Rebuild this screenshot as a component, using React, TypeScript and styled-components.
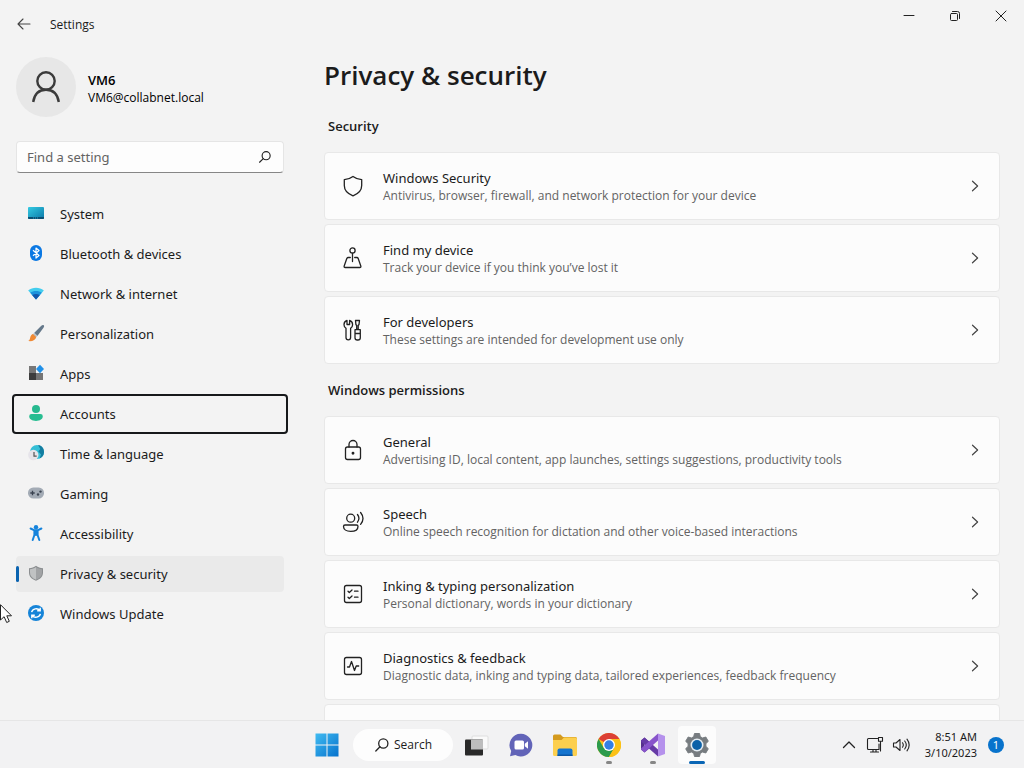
import React from "react";
import styled, { createGlobalStyle, css } from "styled-components";

const GlobalStyle = createGlobalStyle`
  *, *::before, *::after { box-sizing: border-box; }
  html, body { margin: 0; padding: 0; }
  body {
    background: #f3f3f3;
    color: #1b1b1b;
    font-family: "Noto Sans", "Open Sans", sans-serif;
    font-size: 13px;
    line-height: 20px;
  }
  button, input { font: inherit; color: inherit; }
  h1, h2, p { margin: 0; }
  svg { display: block; flex: none; }
`;

const Desktop = styled.div`
  position: relative;
  display: flex;
  flex-direction: column;
  height: 100vh;
  overflow: hidden;
`;

const Window = styled.div`
  flex: 1;
  min-height: 0;
  display: flex;
  flex-direction: column;
`;

const TitleBar = styled.header`
  flex: none;
  display: flex;
  justify-content: space-between;
  align-items: flex-start;
  height: 48px;
`;

const TitleGroup = styled.div`
  display: flex;
  align-items: center;
  height: 48px;
  padding-left: 8px;
  gap: 10px;
  font-family: "Open Sans", sans-serif;
  font-size: 12px;
`;

const WindowTitle = styled.span`
  padding-top: 2px;
`;

const PlainButton = styled.button`
  display: flex;
  align-items: center;
  justify-content: center;
  padding: 0;
  border: 0;
  background: transparent;
`;

const BackButton = styled(PlainButton)`
  width: 32px;
  height: 32px;
`;

const CaptionButtons = styled.div`
  display: flex;
`;

const CaptionButton = styled(PlainButton)`
  width: 46px;
  height: 32px;
`;

const Columns = styled.div`
  flex: 1;
  min-height: 0;
  display: grid;
  grid-template-columns: 300px minmax(0, 1fr);
`;

const Sidebar = styled.aside`
  padding: 9px 16px 0;
`;

const Profile = styled.div`
  display: flex;
  align-items: center;
  gap: 12px;
  height: 60px;
`;

const Avatar = styled.div`
  display: flex;
  align-items: center;
  justify-content: center;
  width: 60px;
  height: 60px;
  border-radius: 50%;
  background: #e7e7e7;
`;

const ProfileText = styled.div`
  padding-top: 4px;
  color: #000;
  font-family: "Open Sans", sans-serif;
  line-height: 18px;
`;

const ProfileName = styled.p`
  font-weight: 600;
`;

const ProfileMail = styled.p`
  font-size: 12px;
`;

const SearchField = styled.label`
  display: flex;
  align-items: center;
  width: 268px;
  height: 32px;
  margin-top: 24px;
  padding: 0 11px 0 10px;
  border: 1px solid #e5e5e5;
  border-bottom-color: #868686;
  border-radius: 4px;
  background: #fdfdfd;
`;

const SearchInput = styled.input`
  flex: 1;
  min-width: 0;
  padding: 0;
  border: 0;
  outline: 0;
  background: transparent;
  &::placeholder { color: #636363; opacity: 1; }
`;

const NavList = styled.nav`
  display: flex;
  flex-direction: column;
  gap: 4px;
  width: 268px;
  margin-top: 23px;
`;

const NavItem = styled.a<{ $focused?: boolean; $current?: boolean }>`
  display: flex;
  align-items: center;
  gap: 14px;
  height: 36px;
  padding-left: 10px;
  border-radius: 4px;
  color: #1b1b1b;
  text-decoration: none;
  ${(p) => p.$focused && css`
    height: 40px;
    margin: -2px -4px;
    padding-left: 12px;
    border: 2px solid #16181a;
  `}
  ${(p) => p.$current && css`
    padding-left: 0;
    gap: 0;
    background: #eaeaea;
    &::before {
      content: "";
      width: 3px;
      height: 16px;
      margin-right: 7px;
      border-radius: 2px;
      background: #0a63b0;
    }
    & > svg { margin-right: 14px; }
  `}
`;

const Main = styled.main`
  min-width: 0;
  min-height: 0;
  overflow: hidden;
  padding: 8px 24px 0;
`;

const PageTitle = styled.h1`
  font-family: "Open Sans", sans-serif;
  font-size: 26px;
  line-height: 38px;
  font-weight: 600;
`;

const SectionTitle = styled.h2`
  margin: 16px 4px;
  font-family: "Open Sans", sans-serif;
  font-size: 13px;
  line-height: 20px;
  font-weight: 600;
  ${PageTitle} + & { margin-top: 22px; }
`;

const CardList = styled.div`
  display: flex;
  flex-direction: column;
  gap: 4px;
`;

const Card = styled.button`
  display: flex;
  align-items: center;
  width: 100%;
  height: 68px;
  padding: 0 18px 0 16px;
  border: 1px solid #e8e8e8;
  border-radius: 4px;
  background: #fcfcfc;
  text-align: left;
`;

const CardText = styled.span`
  flex: 1;
  min-width: 0;
  display: flex;
  flex-direction: column;
  margin-left: 18px;
  padding-top: 2px;
  line-height: 18px;
`;

const CardDetail = styled.span`
  font-family: "Open Sans", sans-serif;
  font-size: 12px;
  color: #636363;
`;

const Taskbar = styled.footer`
  flex: none;
  display: grid;
  grid-template-columns: 1fr auto 1fr;
  align-items: center;
  height: 48px;
  border-top: 1px solid #e6e6e6;
  background: #f2f2f3;
`;

const TaskGroup = styled.div`
  grid-column: 2;
  display: flex;
  align-items: center;
`;

const TaskButton = styled(PlainButton)<{ $state?: "running" | "active" }>`
  position: relative;
  width: 44px;
  height: 40px;
  ${(p) => p.$state && css`
    &::after {
      content: "";
      position: absolute;
      bottom: 1px;
      left: 50%;
      width: ${p.$state === "active" ? 16 : 6}px;
      height: 3px;
      border-radius: 2px;
      background: ${p.$state === "active" ? "#0a66b5" : "#868686"};
      transform: translateX(-50%);
    }
  `}
`;

const ActiveTile = styled.span`
  display: flex;
  align-items: center;
  justify-content: center;
  width: 38px;
  height: 38px;
  border-radius: 4px;
  background: #fcfcfc;
`;

const SearchPill = styled(PlainButton)`
  width: 100px;
  height: 32px;
  margin: 0 2px 0 4px;
  gap: 4px;
  border-radius: 16px;
  background: #fdfdfd;
  font-family: "Open Sans", sans-serif;
  font-size: 12px;
`;

const Tray = styled.div`
  display: flex;
  align-items: center;
  justify-content: flex-end;
  padding-right: 20px;
`;

const TrayButton = styled(PlainButton)`
  width: 24px;
  height: 32px;
  margin-right: 2px;
`;

const Clock = styled.time`
  width: 62px;
  margin-right: 11px;
  font-size: 11px;
  line-height: 16px;
  text-align: right;
  white-space: nowrap;
`;

const Badge = styled.span`
  width: 16px;
  height: 16px;
  border-radius: 50%;
  background: #0873cc;
  color: #fff;
  font-size: 11px;
  line-height: 16px;
  text-align: center;
`;

const Pointer = styled.svg`
  position: absolute;
  left: 0;
  top: 604px;
`;

type IconProps = { children: React.ReactNode; size?: number; box?: number };

const Line = ({ children, size = 24, box = 24 }: IconProps) => (
  <svg width={size} height={size} viewBox={`0 0 ${box} ${box}`} fill="none" stroke="#222" strokeWidth="1.3" strokeLinecap="round" strokeLinejoin="round" aria-hidden="true">
    {children}
  </svg>
);

const Picture = ({ children, size = 20, box = 20 }: IconProps) => (
  <svg width={size} height={size} viewBox={`0 0 ${box} ${box}`} aria-hidden="true">{children}</svg>
);

const Magnifier = ({ size }: { size: number }) => (
  <Line size={size} box={16}>
    <circle cx="9.3" cy="6.5" r="4.6" />
    <path d="M6 9.8 1.8 14" />
  </Line>
);

const Chevron = () => (
  <Line size={12} box={12}>
    <path d="M3.500 1.200 8.600 6l-5.100 4.800" stroke="#444" strokeWidth="1.200" />
  </Line>
);

const navItems: { label: string; icon: React.ReactNode; focused?: boolean; current?: boolean }[] = [
  {
    label: "System",
    icon: (
      <Picture>
        <defs><linearGradient id="sys" x1="0" y1="0" x2="1" y2="1"><stop stopColor="#34cbe3" /><stop offset="1" stopColor="#0b78a8" /></linearGradient></defs>
        <rect x="2" y="3" width="16" height="12" rx="1" fill="url(#sys)" />
        <path d="M2 13h16v1a1 1 0 0 1-1 1H3a1 1 0 0 1-1-1z" fill="#0a4f73" />
        <path d="M7 14h6" stroke="#38b5d8" strokeWidth=".8" strokeDasharray="1 1" />
      </Picture>
    ),
  },
  {
    label: "Bluetooth & devices",
    icon: (
      <Picture>
        <rect x="4" y="1" width="12" height="16" rx="6" fill="#0b78e3" />
        <path d="M7 6.2 13 11.5 10 14V4l3 2.5L7 11.8" fill="none" stroke="#fff" strokeWidth="1.2" strokeLinejoin="round" />
      </Picture>
    ),
  },
  {
    label: "Network & internet",
    icon: (
      <Picture>
        <path d="M2.2 6.4C6.500 3 13.500 3 17.800 6.400L10 15.500z" fill="#43cdee" />
        <path d="M4.200 8.800C7.500 6.300 12.500 6.300 15.800 8.800L10 15.500z" fill="#1a93dc" />
        <path d="M6.300 11.200C8.300 9.600 11.700 9.600 13.700 11.200L10 15.500z" fill="#1157ab" />
      </Picture>
    ),
  },
  {
    label: "Personalization",
    icon: (
      <Picture>
        <path d="M17.700 1.300c.7.700.4 1.600-.2 2.400L11.400 12 8.100 9l7.200-7.200c.8-.7 1.700-1.200 2.400-.5z" fill="#64788a" />
        <path d="M8.300 8.700 11.500 11.700l-1.500 1.700L6.800 10.300z" fill="#b8c0c6" />
        <path d="M7 10 10.200 13c-.5 3-3.800 4.700-8 4.100 2-1 1.700-2.700 2.300-4.500.4-1.300 1.300-2.300 2.500-2.600z" fill="#f08a35" />
      </Picture>
    ),
  },
  {
    label: "Apps",
    icon: (
      <Picture>
        <rect x="3" y="2" width="7" height="7" fill="#777" />
        <rect x="3" y="9" width="7" height="7" fill="#3d3d3d" />
        <rect x="10" y="9" width="7" height="7" fill="#757575" />
        <path d="M14 .8 18 5l-4 4.200L10 5z" fill="#2090e8" />
      </Picture>
    ),
  },
  {
    label: "Accounts",
    focused: true,
    icon: (
      <Picture>
        <circle cx="10" cy="5" r="4" fill="#27b98f" />
        <path d="M5.500 10h9A2.300 2.300 0 0 1 16.800 12.300C16.800 15 14 17 10 17s-6.800-2-6.800-4.700A2.300 2.300 0 0 1 5.500 10z" fill="#27bd91" />
      </Picture>
    ),
  },
  {
    label: "Time & language",
    icon: (
      <Picture>
        <circle cx="11" cy="8" r="7" fill="#35bfd6" />
        <path d="M12 1.100c4 .5 6.300 3.500 6 7.500-.2 2.700-2 5-4.500 6l1.500-4.200-2.700-3 2-2.500z" fill="#137da0" />
        <circle cx="7.300" cy="11" r="5.200" fill="#e6e4ea" />
        <path d="M8 8v4.200h2.700" stroke="#555" strokeWidth="1.200" fill="none" />
      </Picture>
    ),
  },
  {
    label: "Gaming",
    icon: (
      <Picture>
        <rect x="2" y="3.500" width="16" height="11" rx="5.300" fill="#a3abb5" />
        <path d="M4.300 9h4.400M6.500 6.800v4.400" stroke="#3a4250" strokeWidth="1.300" />
        <circle cx="12" cy="10.500" r="1.200" fill="#3e4653" />
        <circle cx="14.500" cy="7.600" r="1.200" fill="#3e4653" />
      </Picture>
    ),
  },
  {
    label: "Accessibility",
    icon: (
      <Picture>
        <circle cx="10" cy="3.200" r="2.200" fill="#1583dc" />
        <path d="M4.600 4.500 8 6.200h4l3.400-1.700M10 6.500V11M8.400 6.500v4.500L6.700 16M11.600 6.500v4.500l1.700 5" fill="none" stroke="#1583dc" strokeWidth="2" strokeLinecap="round" strokeLinejoin="round" />
      </Picture>
    ),
  },
  {
    label: "Privacy & security",
    current: true,
    icon: (
      <Picture>
        <path d="M10 1.800c2 1.700 4.300 2.400 7 2.500v4.200c0 4-2.500 6.500-7 8.300-4.500-1.800-7-4.300-7-8.300V4.300c2.700-.1 5-.8 7-2.500z" fill="#8b8e90" />
        <path d="M10 3c1.700 1.400 3.700 2 6 2.200v3.300c0 3.500-2 5.600-6 7.200z" fill="#a1a3a5" />
        <path d="M10 3v12.700C6 14.100 4 12 4 8.500V5.200C6.300 5 8.300 4.400 10 3z" fill="#c0c2c3" />
      </Picture>
    ),
  },
  {
    label: "Windows Update",
    icon: (
      <Picture>
        <circle cx="10" cy="9" r="8" fill="#1684d8" />
        <path d="M5.600 8.200C6.500 4.600 11.500 3.500 14 6.500M14.200 3.800v3h-3M14.400 9.800C13.500 13.400 8.500 14.500 6 11.500M5.800 14.200v-3h3" fill="none" stroke="#fff" strokeWidth="1.400" />
      </Picture>
    ),
  },
];

type Setting = { title: string; detail: string; icon: React.ReactNode };

const security: Setting[] = [
  {
    title: "Windows Security",
    detail: "Antivirus, browser, firewall, and network protection for your device",
    icon: <Line><path d="M12 2.500c2.600 2 5.400 3 8.700 3.100v5.900c0 5-3.200 8.200-8.700 10.400-5.500-2.200-8.700-5.400-8.700-10.400V5.600C6.600 5.500 9.400 4.500 12 2.500z" /></Line>,
  },
  {
    title: "Find my device",
    detail: "Track your device if you think you\u2019ve lost it",
    icon: (
      <Line>
        <circle cx="11.500" cy="4.500" r="2.600" />
        <path d="M11.500 7.100v8.400M9.300 11.500H7.200c-.7 0-1.100.4-1.400 1L3.200 20c-.3.900.1 1.500 1 1.500h14.600c.9 0 1.300-.6 1-1.500L17.200 12.500c-.2-.6-.7-1-1.400-1h-2.100" />
      </Line>
    ),
  },
  {
    title: "For developers",
    detail: "These settings are intended for development use only",
    icon: (
      <Line>
        <path d="M6 2.500C4 3 3 4.700 3 6.700c0 1.700.8 2.800 2 3.600V19.500a2.300 2.300 0 0 0 4.600 0v-9.200c1.200-.8 2-1.900 2-3.600 0-2-1-3.700-3-4.200v4H6z" />
        <path d="M14.500 2.500h4l-.5 4-.8 1v4h-1.500v-4l-.8-1zM14 11.700h5.300v8a2.300 2.300 0 0 1-2.300 2.300h-.7a2.300 2.300 0 0 1-2.300-2.300zM14 15.500h5.300" />
      </Line>
    ),
  },
];

const permissions: Setting[] = [
  {
    title: "General",
    detail: "Advertising ID, local content, app launches, settings suggestions, productivity tools",
    icon: (
      <Line>
        <rect x="4.500" y="9" width="15" height="12.500" rx="2" />
        <path d="M8 9V6.500a4 4 0 0 1 8 0V9" />
        <circle cx="12" cy="15.200" r=".8" fill="#222" />
      </Line>
    ),
  },
  {
    title: "Speech",
    detail: "Online speech recognition for dictation and other voice-based interactions",
    icon: (
      <Line>
        <circle cx="9.700" cy="8.200" r="4" />
        <path d="M4 15h11.500c1 0 1.500.6 1.500 1.400 0 3-3 4.900-7.300 4.900S2.500 19.400 2.500 16.400C2.500 15.600 3 15 4 15zM16.500 4.500c1.800 2.400 1.800 5.300 0 7.700M19.600 2.500c3 3.700 3 8.100 0 11.800" />
      </Line>
    ),
  },
  {
    title: "Inking & typing personalization",
    detail: "Personal dictionary, words in your dictionary",
    icon: (
      <Line>
        <rect x="3.500" y="3.500" width="17" height="17" rx="2" />
        <path d="M7 9.200 8.300 10.500 11 8M13.500 9.200H17M7 15.200l1.300 1.300L11 14M13.500 15.200H17" />
      </Line>
    ),
  },
  {
    title: "Diagnostics & feedback",
    detail: "Diagnostic data, inking and typing data, tailored experiences, feedback frequency",
    icon: (
      <Line>
        <rect x="3.500" y="3.500" width="17" height="17" rx="2" />
        <path d="M6.500 13h2L10.500 7.500 13.500 16.500l1.700-4.500h2.500" />
      </Line>
    ),
  },
];

const SettingCard = ({ title, detail, icon }: Setting) => (
  <Card type="button">
    {icon}
    <CardText>
      <span>{title}</span>
      <CardDetail>{detail}</CardDetail>
    </CardText>
    <Chevron />
  </Card>
);

const StartLogo = () => (
  <Picture size={24} box={24}>
    <defs><linearGradient id="start" gradientUnits="userSpaceOnUse" x1="0" y1="0" x2="24" y2="24"><stop stopColor="#42bdf2" /><stop offset="1" stopColor="#0470cc" /></linearGradient></defs>
    <path fill="url(#start)" d="M.5.500h11v11H.5zM12.500.5h11v11h-11zM.5 12.500h11v11H.5zM12.500 12.500h11v11h-11z" />
  </Picture>
);

const TaskViewLogo = () => (
  <Picture size={24} box={24}>
    <rect x="7" y="3" width="16" height="13" rx="1" fill="#fafafa" stroke="#dedede" />
    <rect x="0" y="6.500" width="18" height="16" rx="1" fill="#292929" />
    <path d="M6 6.500h12v10H6z" fill="#bdbdbd" />
  </Picture>
);

const ChatLogo = () => (
  <Picture size={24} box={24}>
    <path d="M12 .8a11.300 11.300 0 1 1-5.600 21.100L1 23.200l1.200-5.200A11.300 11.300 0 0 1 12 .8z" fill="#6264b8" />
    <rect x="5.500" y="7.500" width="9.500" height="9" rx="1.500" fill="#fff" />
    <path d="m15.800 10.800 3.200-2.600v7.600l-3.200-2.600z" fill="#fff" />
  </Picture>
);

const FolderLogo = () => (
  <Picture size={26} box={26}>
    <path d="M1 4a1.500 1.500 0 0 1 1.500-1.500h6L11 5h12.500A1.500 1.500 0 0 1 25 6.500V12H1z" fill="#d49a1e" />
    <path d="M1 8h8.500L12 5.500h11.500A1.500 1.500 0 0 1 25 7v15.500a1.500 1.500 0 0 1-1.500 1.500h-21A1.500 1.500 0 0 1 1 22.500z" fill="#fccf4e" />
    <path d="M5.500 24v-5.500a2 2 0 0 1 2-2h11a2 2 0 0 1 2 2V24z" fill="#1474cf" />
    <path d="M5.500 22.500h15V24h-15z" fill="#0b57a5" />
  </Picture>
);

const ChromeLogo = () => (
  <Picture size={24} box={24}>
    <circle cx="12" cy="12" r="12" fill="#fbc117" />
    <path d="M12 12 1.600 6A12 12 0 0 1 22.400 6H12z" fill="#dc3f35" />
    <path d="M1.600 6A12 12 0 0 0 12 24l5.200-9L12 12 6.800 15z" fill="#2c9b4c" />
    <path d="M22.400 6A12 12 0 0 1 12 24l5.200-9L16 6z" fill="#fbc117" />
    <circle cx="12" cy="12" r="6" fill="#fff" />
    <circle cx="12" cy="12" r="4.700" fill="#337fe4" />
  </Picture>
);

const StudioLogo = () => (
  <Picture size={26} box={26}>
    <path d="M1 8.500v9L4.500 20.500 9.200 16.500V9.700L4.500 5.500z" fill="#56308e" />
    <path d="m4.500 10.500 3 2.500-3 2.700z" fill="#f2f2f3" />
    <path d="M4.500 5.500 18 17.500V24.500L1 9.500v-1z" fill="#663aa6" />
    <path d="M18 1.500v7L4.500 20.500 1 17.500v-1z" fill="#8854cb" />
    <path d="M18 1.500 25 4v18l-7 2.500z" fill="#b591ec" />
  </Picture>
);

const GearLogo = () => (
  <Picture size={26} box={26}>
    <path d="M10.500 1.500h5l.8 3.200 2.300 1.300 3.200-1 2.500 4.300-2.400 2.300v2.800l2.400 2.300-2.500 4.300-3.200-1-2.300 1.300-.8 3.200h-5l-.8-3.200L7.400 20l-3.200 1-2.500-4.300 2.400-2.300v-2.800L1.700 9.300 4.200 5l3.200 1 2.300-1.300z" fill="#777c80" stroke="#777c80" strokeWidth="1" strokeLinejoin="round" />
    <circle cx="13" cy="13" r="6.500" fill="#e5edf3" />
    <circle cx="13" cy="13" r="4.900" fill="#0c61a8" />
  </Picture>
);

export default function App() {
  return (
    <Desktop>
      <GlobalStyle />
      <Window>
        <TitleBar>
          <TitleGroup>
            <BackButton type="button" aria-label="Back">
              <Line size={16} box={16}><path d="M14 8H2M7 3 2 8l5 5" stroke="#444" strokeWidth="1.100" /></Line>
            </BackButton>
            <WindowTitle>Settings</WindowTitle>
          </TitleGroup>
          <CaptionButtons>
            <CaptionButton type="button" aria-label="Minimize">
              <Line size={12} box={12}><path d="M1 5.500h10" strokeWidth="1" /></Line>
            </CaptionButton>
            <CaptionButton type="button" aria-label="Restore">
              <Line size={12} box={12}>
                <rect x="1.500" y="3.500" width="7" height="7" rx="1" strokeWidth="1" />
                <path d="M3.500 1.500h5a2 2 0 0 1 2 2v5" strokeWidth="1" />
              </Line>
            </CaptionButton>
            <CaptionButton type="button" aria-label="Close">
              <Line size={12} box={12}><path d="m1 1 10 10M11 1 1 11" strokeWidth="1" /></Line>
            </CaptionButton>
          </CaptionButtons>
        </TitleBar>

        <Columns>
          <Sidebar>
            <Profile>
              <Avatar>
                <svg width="32" height="32" viewBox="0 0 32 32" fill="none" stroke="#3b3b3b" strokeWidth="2.400" aria-hidden="true">
                  <circle cx="16" cy="10" r="8.700" />
                  <path d="M3.200 31C4.500 23 9 18.800 16 18.800S27.500 23 28.800 31" />
                </svg>
              </Avatar>
              <ProfileText>
                <ProfileName>VM6</ProfileName>
                <ProfileMail>VM6@collabnet.local</ProfileMail>
              </ProfileText>
            </Profile>
            <SearchField>
              <SearchInput type="text" placeholder="Find a setting" aria-label="Find a setting" />
              <Magnifier size={14} />
            </SearchField>
            <NavList>
              {navItems.map((item) => (
                <NavItem key={item.label} href="#" $focused={item.focused} $current={item.current}>
                  {item.icon}
                  {item.label}
                </NavItem>
              ))}
            </NavList>
          </Sidebar>

          <Main>
            <PageTitle>Privacy &amp; security</PageTitle>
            <SectionTitle>Security</SectionTitle>
            <CardList>
              {security.map((s) => <SettingCard key={s.title} {...s} />)}
            </CardList>
            <SectionTitle>Windows permissions</SectionTitle>
            <CardList>
              {permissions.map((s) => <SettingCard key={s.title} {...s} />)}
              <Card as="div" />
            </CardList>
          </Main>
        </Columns>
      </Window>

      <Taskbar>
        <TaskGroup>
          <TaskButton type="button" aria-label="Start"><StartLogo /></TaskButton>
          <SearchPill type="button"><Magnifier size={16} />Search</SearchPill>
          <TaskButton type="button" aria-label="Task view"><TaskViewLogo /></TaskButton>
          <TaskButton type="button" aria-label="Chat"><ChatLogo /></TaskButton>
          <TaskButton type="button" aria-label="File Explorer"><FolderLogo /></TaskButton>
          <TaskButton type="button" aria-label="Chrome" $state="running"><ChromeLogo /></TaskButton>
          <TaskButton type="button" aria-label="Visual Studio" $state="running"><StudioLogo /></TaskButton>
          <TaskButton type="button" aria-label="Settings" $state="active"><ActiveTile><GearLogo /></ActiveTile></TaskButton>
        </TaskGroup>
        <Tray>
          <TrayButton type="button" aria-label="Show hidden icons">
            <Line size={16} box={16}><path d="m2.500 10.500 5.500-5.500 5.500 5.500" /></Line>
          </TrayButton>
          <TrayButton type="button" aria-label="Network">
            <Line size={18} box={18}><path d="M11.500 2.500H2.500a1 1 0 0 0-1 1v9a1 1 0 0 0 1 1h10.500V8M4.500 16h8M7 13.500V16M10 13.500V16M12.500 1.500h4v3.700h-4zM14.500 5.200V15" strokeWidth="1.100" /></Line>
          </TrayButton>
          <TrayButton type="button" aria-label="Volume">
            <Line size={18} box={18}><path d="M1.500 7v4h2.500l4 3.500v-11L4 7zM10.500 6.800c1 1.400 1 3 0 4.400M12.700 5c2 2.500 2 5.500 0 8M15 3.200c2.700 3.600 2.700 8 0 11.600" strokeWidth="1.100" /></Line>
          </TrayButton>
          <Clock>8:51 AM<br />3/10/2023</Clock>
          <Badge>1</Badge>
        </Tray>
      </Taskbar>

      <Pointer width="13" height="20" viewBox="0 0 13 20" aria-hidden="true">
        <path d="M.5.700v15.300l3.600-3.300 2.600 5.800 2.600-1.200-2.500-5.500h4.700z" fill="#fff" stroke="#222" />
      </Pointer>
    </Desktop>
  );
}
